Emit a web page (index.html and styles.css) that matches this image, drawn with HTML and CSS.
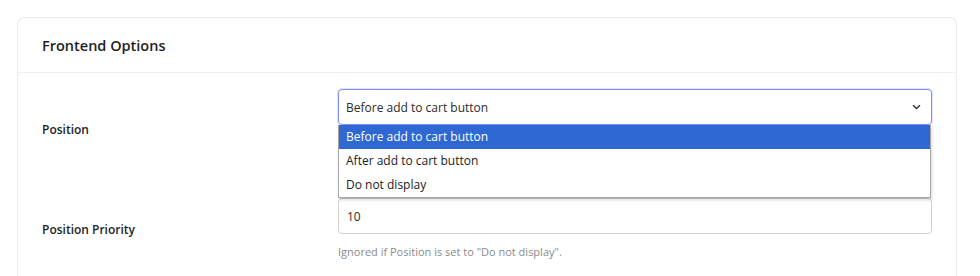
FILE: index.html
```html
<!DOCTYPE html>
<html lang="en">
<head>
    <meta charset="UTF-8">
    <title>Frontend Options</title>
    <link rel="stylesheet" href="styles.css">
</head>
<body>
    <div class="card">
        <div class="card-header">
            <h2>Frontend Options</h2>
        </div>

        <div class="card-body">
            <div class="form-row row-position">
                <label class="form-label">Position</label>
                <div class="form-field">
                    <div class="select-wrap">
                        <div class="select-box">
                            <span>Before add to cart button</span>
                            <svg class="chevron" width="9" height="6" viewBox="0 0 9 6">
                                <path d="M1 1.2 L4.5 4.6 L8 1.2" fill="none" stroke="#333" stroke-width="1.4"/>
                            </svg>
                        </div>
                        <ul class="select-menu">
                            <li class="selected">Before add to cart button</li>
                            <li>After add to cart button</li>
                            <li>Do not display</li>
                        </ul>
                    </div>
                </div>
            </div>

            <div class="form-row">
                <label class="form-label">Position Priority</label>
                <div class="form-field">
                    <div class="text-input">10</div>
                    <p class="help">Ignored if Position is set to "Do not display".</p>
                </div>
            </div>
        </div>
    </div>
</body>
</html>
```

FILE: styles.css
```css
body {
    margin: 0;
    padding: 17px 23px 0 17px;
    background: #fff;
    font-family: 'Open Sans', 'Noto Sans', sans-serif;
    color: #1d2327;
    overflow: hidden;
}
.card {
    border: 1px solid #ebebeb;
    border-bottom: none;
    border-radius: 8px 8px 0 0;
    background: #fff;
    height: 258px;
}
.card-header {
    height: 54px;
    display: flex;
    align-items: center;
    padding: 0 24px;
    border-bottom: 1px solid #f0f0f0;
}
.card-header h2 {
    margin: 0;
    font-size: 14.5px;
    font-weight: 600;
    color: #1e1e1e;
}
.card-body {
    padding: 16px 24px 0 24px;
}
.form-row {
    display: grid;
    grid-template-columns: 296px 1fr;
    align-items: center;
}
.row-position {
    margin-bottom: 28px;
}
.row-position .form-field {
    height: 81px;
}
.form-label {
    font-size: 12px;
    font-weight: 600;
    color: #1d2327;
}
.select-wrap {
    position: relative;
}
.select-box {
    height: 34px;
    border: 1px solid #7f8ff4;
    border-radius: 4px;
    box-shadow: 0 0 0 1px rgba(127, 143, 244, 0.25);
    display: flex;
    align-items: center;
    justify-content: space-between;
    padding: 0 10px 0 7px;
    font-size: 12px;
    color: #2b2b2b;
}
.select-menu {
    position: absolute;
    top: 36px;
    left: 0;
    right: 1px;
    margin: 0;
    padding: 0;
    list-style: none;
    background: #fff;
    border: 1px solid #a5a5a5;
    border-top: none;
    box-shadow: 1px 2px 3px rgba(0, 0, 0, 0.15);
    z-index: 2;
}
.select-menu li {
    height: 24px;
    line-height: 24px;
    padding-left: 7px;
    font-size: 12px;
    color: #222;
}
.select-menu li.selected {
    background: #2f67d3;
    color: #fff;
}
.text-input {
    height: 34px;
    border: 1px solid #cfcfcf;
    border-radius: 4px;
    display: flex;
    align-items: center;
    padding: 0 8px;
    font-size: 12px;
    color: #2b2b2b;
}
.help {
    margin: 9px 0 0 0;
    font-size: 11px;
    line-height: 18px;
    color: #8a8a8a;
}
```
